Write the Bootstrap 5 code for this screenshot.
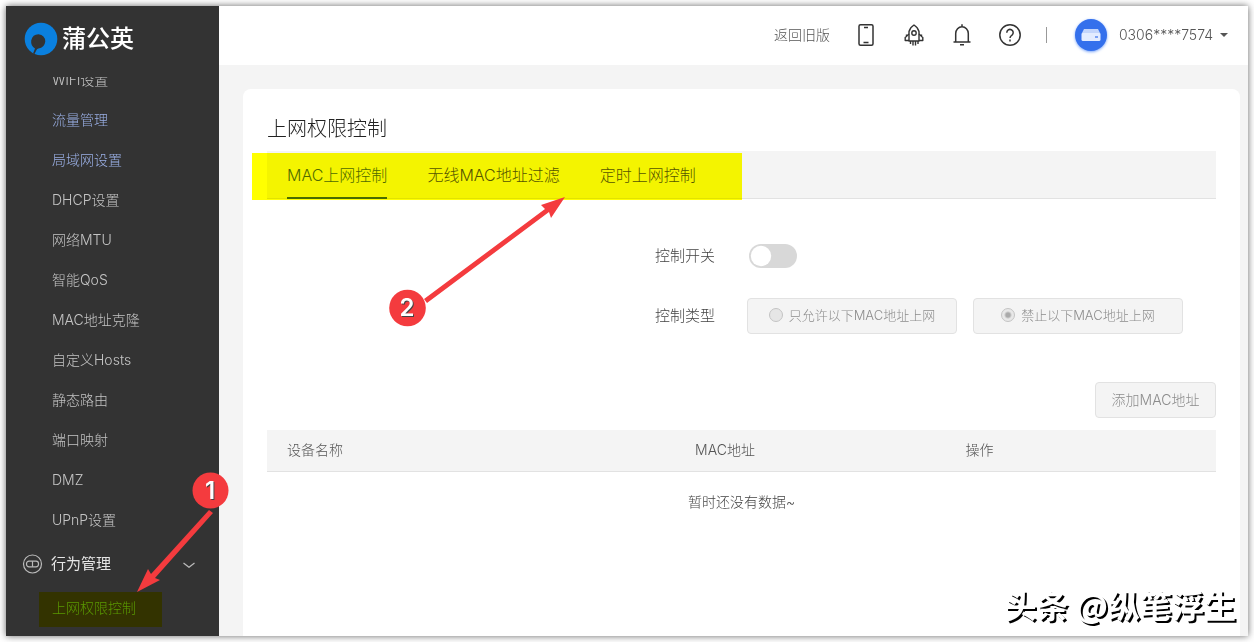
<!DOCTYPE html>
<html lang="zh-CN">
<head>
<meta charset="utf-8">
<meta name="viewport" content="width=device-width, initial-scale=1">
<title>上网权限控制</title>
<link rel="stylesheet" href="https://cdn.jsdelivr.net/npm/bootstrap@5.3.0/dist/css/bootstrap.min.css">
<style>
:root { --page-gray: #f4f4f4; --line: #e2e2e2; }
body { font-family: Inter, "Noto Sans CJK SC", sans-serif; font-weight: 300; font-size: 14px; line-height: 20px; color: #555; background: #fff; padding: 6px; }
a { color: inherit; text-decoration: none; }
.shell { min-height: calc(100vh - 12px); background: var(--page-gray); box-shadow: 0 0 7px rgba(0,0,0,.6); }
/* sidebar */
.side { width: 213px; background: #333; color: #c4c4c4; }
.brand { height: 71px; padding: 0 0 5px 18px; gap: 4px; color: #fff; font-size: 24px; line-height: 32px; font-weight: 500; }
.side-scroll { overflow: hidden; flex: 1 1 0; }
.side-menu { margin-top: -17px; }
.side-menu a { height: 40px; padding-left: 46px; display: flex; align-items: center; }
.side-menu a.visited-item { color: #9bb0e6; }
.side-menu button { height: 48px; font-size: 15px; color: #e6e6e6; padding: 0 24px 0 16px; gap: 8px; background: none; border: 0; }
.side-menu a.current { color: #5a9a30; }
/* top bar */
.topbar { height: 59px; background: #fff; padding: 0 20px 2px 0; }
.topbar .icons { gap: 24px; margin-left: 24px; }
.topbar .icons button { padding: 0; border: 0; background: none; width: 24px; height: 24px; display: flex; }
.split { width: 1px; height: 16px; background: #999; margin: 0 28px 0 24px; }
.avatar { width: 32px; height: 32px; background: #3470ec; box-shadow: 0 1px 3px #79a4f8; margin-right: 12px; }
.account { color: #555; }
.account::after { margin-left: 7px; border-top-color: #555; }
/* content panel */
.main-area { padding: 24px 8px 0 24px; }
.panel { background: #fff; border-radius: 8px 8px 0 0; padding: 24px 24px 0; }
.panel h1 { font-size: 20px; line-height: 32px; font-weight: 300; color: #222; margin: 0 0 6px; }
.tabs { height: 48px; background: var(--page-gray); border-bottom: 1px solid var(--line); padding: 0 20px; gap: 40px; font-size: 16px; }
.tabs button { border: 0; background: none; padding: 2px 0 0; font-weight: 300; color: #555; height: 48px; border-bottom: 2px solid transparent; }
.tabs button.active { color: #4f6a3b; border-color: #4a6c38; }
.switch-line { margin: 39px 0 24px; }
.form-line { min-height: 36px; gap: 32px; }
.form-line > .caption { flex: 0 0 47.2%; text-align: right; font-size: 15px; color: #444; }
.form-switch .form-check-input.power { width: 48px; height: 24px; margin: 0 0 0 2px; background-color: #d8d8d8; border: 0; background-image: url("data:image/svg+xml,%3csvg xmlns='http://www.w3.org/2000/svg' viewBox='-4 -4 8 8'%3e%3ccircle r='3.4' fill='%23fff'/%3e%3c/svg%3e"); }
.choice { width: 210px; height: 36px; border: 1px solid var(--line); border-radius: 4px; background: var(--page-gray); color: #8c8c8c; gap: 6px; font-size: 13px; padding-bottom: 2px; }
.choice input { appearance: none; width: 14px; height: 14px; margin: 0; border: 1px solid #c4c4c4; border-radius: 50%; background: #e6e6e6; }
.choice input:checked { background: radial-gradient(circle, #aaa 0 2px, #e8e8e8 4px); }
.add-btn, .add-btn:disabled { width: 121px; height: 36px; padding: 0 0 2px; font-size: 14px; font-weight: 300; color: #8c8c8c; background: var(--page-gray); border: 1px solid var(--line); border-radius: 4px; opacity: 1; }
.devices { margin: 12px 0 0; color: #555; }
.devices th { font-weight: 300; background: var(--page-gray); border-bottom: 1px solid var(--line); padding: 10px 20px 11px; color: #555; }
.devices td { padding: 20px; border: 0; color: #444; text-align: center; }
/* overlaid notes */
.marker { position: absolute; background: #ff0; mix-blend-mode: multiply; pointer-events: none; }
.tabs-marker { left: -15px; top: 2px; width: 490px; height: 47px; }
.menu-marker { left: 33px; top: 4px; width: 123px; height: 35px; }
.notes { position: absolute; left: 0; top: 0; pointer-events: none; }
.signature { position: absolute; right: 12px; bottom: 12px; font-family: "Noto Sans CJK SC", sans-serif; font-size: 32px; line-height: 40px; font-weight: 700; color: #fff; text-shadow: 2px 2px 0 #000; }
</style>
</head>
<body>
<div class="shell d-flex position-relative">
  <aside class="side d-flex flex-column flex-shrink-0">
    <a href="#" class="brand d-flex align-items-center">
      <svg width="34" height="34" viewBox="0 0 34 34"><circle cx="17" cy="17" r="16.3" fill="#0a80df"/><path d="M9 31.500 11 26.500Q6.600 24 7.200 18.500Q8.600 12.400 14.500 12.300Q21 13.100 21.300 19.500Q20.500 25.800 14.500 26.500Q13 26.500 12.500 28L10.500 32Z" fill="#333"/></svg>
      <span>蒲公英</span>
    </a>
    <nav class="side-scroll">
      <div class="side-menu">
        <a href="#">WiFi设置</a>
        <a href="#" class="visited-item">流量管理</a>
        <a href="#" class="visited-item">局域网设置</a>
        <a href="#">DHCP设置</a>
        <a href="#">网络MTU</a>
        <a href="#">智能QoS</a>
        <a href="#">MAC地址克隆</a>
        <a href="#">自定义Hosts</a>
        <a href="#">静态路由</a>
        <a href="#">端口映射</a>
        <a href="#">DMZ</a>
        <a href="#">UPnP设置</a>
        <button type="button" class="d-flex align-items-center w-100">
          <svg width="21" height="21" viewBox="0 0 21 21" fill="none" stroke="#bbb" stroke-width="1.200"><circle cx="10.500" cy="10" r="9"/><rect x="4.500" y="7.200" width="12" height="5.600" rx="2.500"/><path d="M10.500 7.200v5.600"/></svg>
          <span>行为管理</span>
          <svg class="ms-auto" width="12" height="8" viewBox="0 0 12 8" fill="none" stroke="#bbb" stroke-width="1.200"><path d="M.5 3 6 7.300l5.500-4.300"/></svg>
        </button>
        <div class="position-relative">
          <a href="#" class="current">上网权限控制</a>
          <span class="marker menu-marker"></span>
        </div>
      </div>
    </nav>
  </aside>

  <div class="flex-grow-1 d-flex flex-column">
    <header class="topbar d-flex align-items-center justify-content-end">
      <a href="#">返回旧版</a>
      <div class="icons d-flex">
        <button type="button" aria-label="手机"><svg width="24" height="24" viewBox="0 0 24 24" fill="none" stroke="#333" stroke-width="1.500"><rect x="5" y="1.700" width="14" height="20.600" rx="1.500"/><path d="M10 4.500h4M9.500 19.500h5"/></svg></button>
        <button type="button" aria-label="升级"><svg width="24" height="24" viewBox="0 0 24 24" fill="none" stroke="#333" stroke-width="1.400" stroke-linejoin="round"><path d="M7 18V8.500Q8 4.500 12 2Q16 4.500 17 8.500V18Z"/><circle cx="12" cy="10" r="2.200"/><path d="M7 11 3.200 14.500V17.500H7M17 11l3.800 3.500V17.500H17M8.500 18v3M11 18v4.500M13.500 18v4.500M16 18v3M4.500 11.500v2M19.500 11.500v2"/></svg></button>
        <button type="button" aria-label="消息"><svg width="24" height="24" viewBox="0 0 24 24" fill="none" stroke="#333" stroke-width="1.500"><path d="M3.500 19h17M5.700 19v-8.500a6.300 6.800 0 0 1 12.600 0V19M12 1.200v2.500M10 21.700h4"/></svg></button>
        <button type="button" aria-label="帮助"><svg width="24" height="24" viewBox="0 0 24 24" fill="none" stroke="#333" stroke-width="1.500"><circle cx="12" cy="12" r="10.200"/><path d="M8.800 9.700a3.200 3.200 0 1 1 5.200 2.400Q12 13.400 12 15M12 16.500v2"/></svg></button>
      </div>
      <span class="split"></span>
      <span class="avatar rounded-circle d-flex align-items-center justify-content-center"><svg width="20" height="14" viewBox="0 0 20 14"><path d="M3 1h14l2.500 5H.5Z" fill="#c3d5fb"/><rect x=".5" y="5" width="19" height="8" rx="1.500" fill="#e3ecff"/><path d="M14 9h3" stroke="#3470ec" stroke-width="1.200"/></svg></span>
      <a href="#" class="account dropdown-toggle d-flex align-items-center">0306****7574</a>
    </header>

    <main class="main-area flex-grow-1 d-flex">
      <section class="panel flex-grow-1">
        <h1>上网权限控制</h1>
        <div class="tabs d-flex position-relative">
          <button type="button" class="active">MAC上网控制</button>
          <button type="button">无线MAC地址过滤</button>
          <button type="button">定时上网控制</button>
          <span class="marker tabs-marker"></span>
        </div>
        <div class="form-line switch-line d-flex align-items-center">
          <label class="caption" for="power">控制开关</label>
          <div class="form-switch p-0 d-flex"><input class="form-check-input power" type="checkbox" role="switch" id="power"></div>
        </div>
        <div class="form-line d-flex align-items-center">
          <span class="caption">控制类型</span>
          <div class="d-flex gap-3">
            <label class="choice d-flex align-items-center justify-content-center"><input type="radio" name="kind" disabled>只允许以下MAC地址上网</label>
            <label class="choice d-flex align-items-center justify-content-center"><input type="radio" name="kind" checked disabled>禁止以下MAC地址上网</label>
          </div>
        </div>
        <div class="d-flex justify-content-end pt-5"><button type="button" class="btn add-btn" disabled>添加MAC地址</button></div>
        <table class="table devices">
          <colgroup><col style="width:43%"><col style="width:28.5%"><col style="width:28.5%"></colgroup>
          <thead><tr><th scope="col">设备名称</th><th scope="col">MAC地址</th><th scope="col">操作</th></tr></thead>
          <tbody><tr><td colspan="3">暂时还没有数据~</td></tr></tbody>
        </table>
      </section>
    </main>
  </div>

  <svg class="notes" width="580" height="630" viewBox="6 6 580 630" fill="#f43b3e" font-family="Inter" font-weight="600" font-size="24" text-anchor="middle">
    <path d="M209 510 151 574 148 569 137 592 160 580 155 578 213 513Z"/>
    <circle cx="210.500" cy="490.500" r="18"/>
    <path d="M424 299 545 209 541 205 565 197 551 218 549 212 427 303Z"/>
    <circle cx="407.500" cy="308" r="18.300"/>
    <g fill="#444"><text x="211" y="500">1</text><text x="408" y="317">2</text></g>
    <g fill="#fff"><text x="210" y="499">1</text><text x="407" y="316">2</text></g>
  </svg>
  <div class="signature">头条 @纵笔浮生</div>
</div>
<script src="https://cdn.jsdelivr.net/npm/bootstrap@5.3.0/dist/js/bootstrap.bundle.min.js"></script>
</body>
</html>
